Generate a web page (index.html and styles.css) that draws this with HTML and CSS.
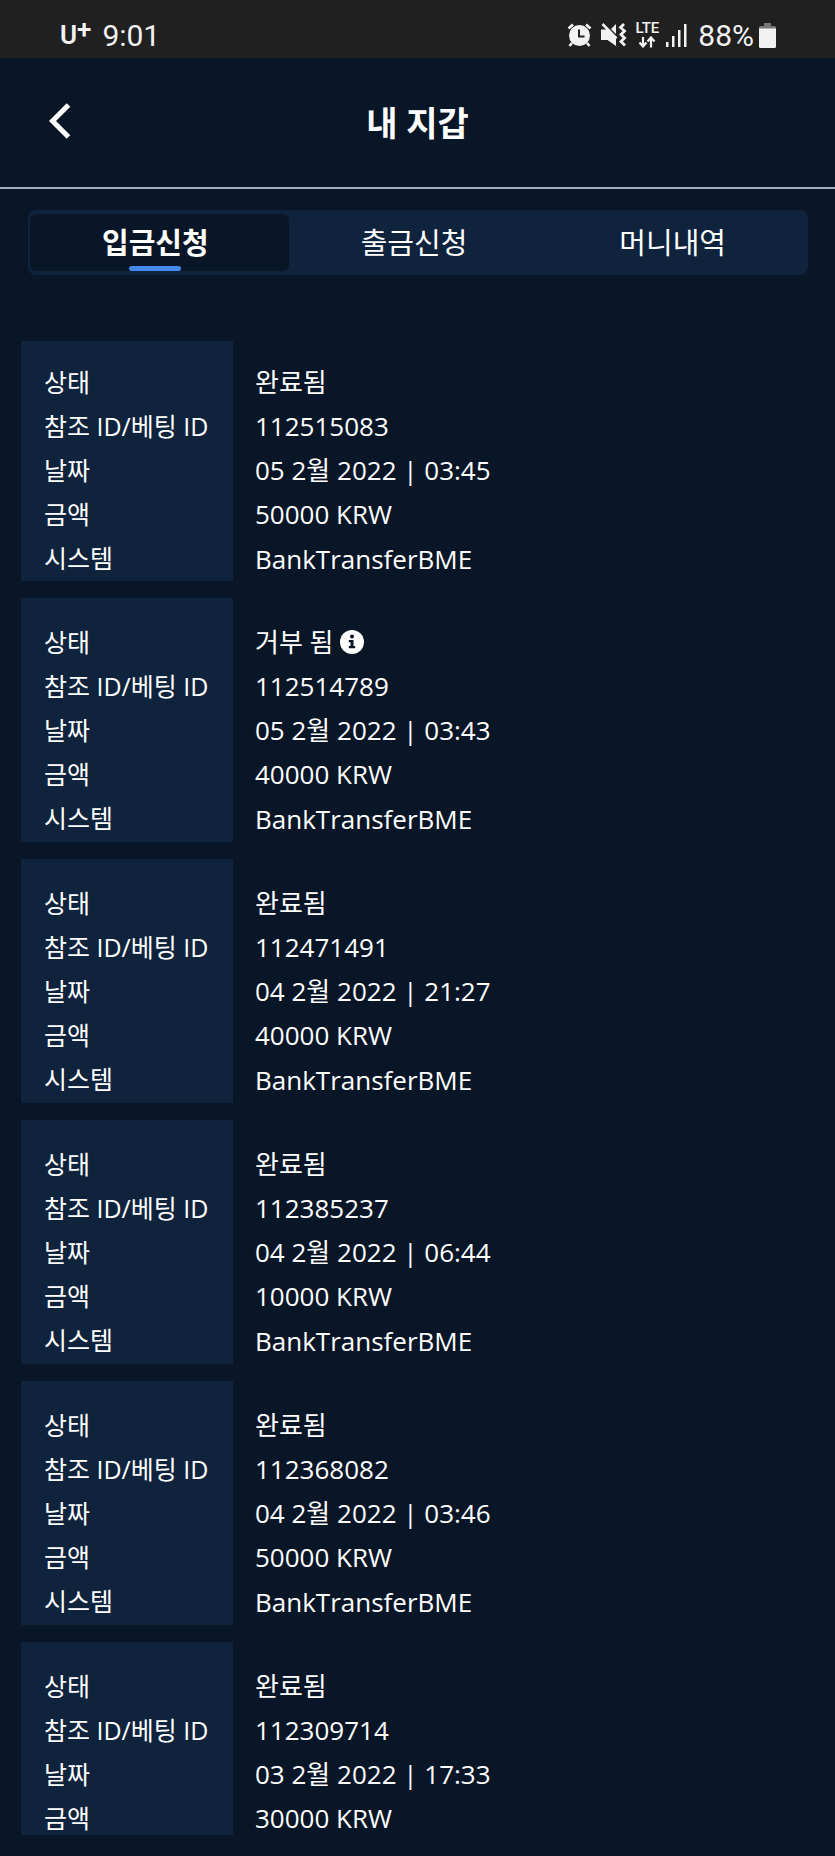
FILE: index.html
```html
<!DOCTYPE html>
<html lang="ko">
<head>
  <meta charset="UTF-8" />
  <meta name="viewport" content="width=device-width, initial-scale=1.0" />
  <title>내 지갑</title>
  <link rel="stylesheet" href="styles.css">
</head>
<body>
  <div class="status-bar">
    <div class="status-left">
      <span class="carrier">U<span class="carrier-plus">+</span></span>
      <span class="clock">9:01</span>
    </div>
    <div class="status-right">
      <svg class="icon-alarm" width="25" height="24" viewBox="0 0 25 24" aria-hidden="true">
        <path d="M1.5 5.5 6 1.5M23.5 5.5 19 1.5M5 20 2.5 23M20 20l2.500 3" fill="none" stroke="#f2f2f2" stroke-width="2.600"/>
        <circle cx="12.500" cy="12.500" r="10.500" fill="#f2f2f2"/>
        <path d="M12 6.500v7h5.500" fill="none" stroke="#202020" stroke-width="2"/>
      </svg>
      <svg class="icon-mute" width="26" height="24" viewBox="0 0 26 24" aria-hidden="true">
        <path d="M0 6.500h6.500L15 15.500V23l-8.500-6H0zM15 1v10l-5-5z" fill="#f2f2f2"/>
        <path d="M1.500 1 15.500 15.500" fill="none" stroke="#f2f2f2" stroke-width="2.600"/>
        <path d="m23 1-3.500 3.500L23.500 8 20 11.500l3.500 3.500-3.500 3.500 4 4" fill="none" stroke="#f2f2f2" stroke-width="2.800"/>
      </svg>
      <div class="network">
        <span>LTE</span>
        <svg width="18" height="12" viewBox="0 0 18 12" aria-hidden="true">
          <path d="M5 1v9M1.500 6.500 5 10.500l3.500-4M13 11.500V2M9.500 5.500 13 1.500l3.500 4" fill="none" stroke="#f2f2f2" stroke-width="2.200"/>
        </svg>
      </div>
      <svg class="icon-signal" width="21" height="23" viewBox="0 0 21 23" aria-hidden="true">
        <path d="M0 18h2.500v5H0zM6 12h2.500v11H6zM12 6h2.500v17H12zM18 0h2.500v23H18z" fill="#f2f2f2"/>
      </svg>
      <span class="battery-level">88%</span>
      <svg class="icon-battery" width="17" height="25" viewBox="0 0 17 25" aria-hidden="true">
        <path d="M5 0h7v3h3.500Q17 3 17 4.500V7H0V4.500Q0 3 1.500 3H5z" fill="#777"/>
        <path d="M0 5.500h17v18q0 1.500-1.500 1.500h-14Q0 25 0 23.500z" fill="#f2f2f2"/>
      </svg>
    </div>
  </div>

  <header class="header">
    <button class="back" type="button" aria-label="뒤로">
      <svg width="22" height="36" viewBox="0 0 22 36" aria-hidden="true">
        <path d="M19.500 2 3.500 18l16 16" fill="none" stroke="#fff" stroke-width="5"/>
      </svg>
    </button>
    <h1>내 지갑</h1>
  </header>

  <nav class="tabs">
    <a class="tab active" href="#deposit">입금신청</a>
    <a class="tab" href="#withdraw">출금신청</a>
    <a class="tab" href="#history">머니내역</a>
  </nav>

  <main class="records">
    <dl class="record">
      <dt>상태</dt><dd>완료됨</dd>
      <dt>참조 ID/베팅 ID</dt><dd>112515083</dd>
      <dt>날짜</dt><dd>05 2월 2022 | 03:45</dd>
      <dt>금액</dt><dd>50000 KRW</dd>
      <dt>시스템</dt><dd>BankTransferBME</dd>
    </dl>
    <dl class="record">
      <dt>상태</dt>
      <dd>거부 됨
        <button class="info" type="button" aria-label="정보">
          <svg width="24" height="24" viewBox="0 0 24 24" aria-hidden="true">
            <circle cx="12" cy="12" r="12" fill="#fff"/>
            <circle cx="12" cy="6.500" r="2" fill="#091627"/>
            <path d="M8.800 10h4.700v6h1.700v2.300H8.800V16h1.700v-3.700H8.800z" fill="#091627"/>
          </svg>
        </button>
      </dd>
      <dt>참조 ID/베팅 ID</dt><dd>112514789</dd>
      <dt>날짜</dt><dd>05 2월 2022 | 03:43</dd>
      <dt>금액</dt><dd>40000 KRW</dd>
      <dt>시스템</dt><dd>BankTransferBME</dd>
    </dl>
    <dl class="record">
      <dt>상태</dt><dd>완료됨</dd>
      <dt>참조 ID/베팅 ID</dt><dd>112471491</dd>
      <dt>날짜</dt><dd>04 2월 2022 | 21:27</dd>
      <dt>금액</dt><dd>40000 KRW</dd>
      <dt>시스템</dt><dd>BankTransferBME</dd>
    </dl>
    <dl class="record">
      <dt>상태</dt><dd>완료됨</dd>
      <dt>참조 ID/베팅 ID</dt><dd>112385237</dd>
      <dt>날짜</dt><dd>04 2월 2022 | 06:44</dd>
      <dt>금액</dt><dd>10000 KRW</dd>
      <dt>시스템</dt><dd>BankTransferBME</dd>
    </dl>
    <dl class="record">
      <dt>상태</dt><dd>완료됨</dd>
      <dt>참조 ID/베팅 ID</dt><dd>112368082</dd>
      <dt>날짜</dt><dd>04 2월 2022 | 03:46</dd>
      <dt>금액</dt><dd>50000 KRW</dd>
      <dt>시스템</dt><dd>BankTransferBME</dd>
    </dl>
    <dl class="record">
      <dt>상태</dt><dd>완료됨</dd>
      <dt>참조 ID/베팅 ID</dt><dd>112309714</dd>
      <dt>날짜</dt><dd>03 2월 2022 | 17:33</dd>
      <dt>금액</dt><dd>30000 KRW</dd>
    </dl>
  </main>
</body>
</html>
```

FILE: styles.css
```css
* { box-sizing: border-box; margin: 0; padding: 0; }
body {
  display: flex;
  flex-direction: column;
  height: 100vh;
  background-color: #091627;
  color: #fff;
  font-family: 'Open Sans', 'Noto Sans CJK KR', sans-serif;
  overflow: hidden;
}
a { text-decoration: none; color: inherit; }
button { background: none; border: 0; color: inherit; cursor: pointer; }
svg { display: block; }

/* phone status bar */
.status-bar {
  display: flex;
  justify-content: space-between;
  flex-shrink: 0;
  height: 58px;
  padding: 12px 59px 0 60px;
  background-color: #202020;
  color: #f2f2f2;
  font-family: Roboto, sans-serif;
}
.status-left,
.status-right {
  display: flex;
  align-items: center;
  height: 46px;
}
.status-left { gap: 11px; }
.carrier {
  display: flex;
  font-size: 26px;
  font-weight: 600;
  line-height: 32px;
}
.carrier-plus {
  font-size: 26px;
  line-height: 20px;
}
.clock,
.battery-level {
  padding-top: 2px;
  font-size: 30px;
  line-height: 32px;
}
.icon-mute { margin-left: 9px; }
.network {
  display: flex;
  flex-direction: column;
  align-items: center;
  gap: 1px;
  margin-left: 8px;
  font-size: 15px;
  font-weight: 500;
  line-height: 13px;
}
.icon-signal { margin-left: 7px; }
.battery-level { margin-left: 11px; }
.icon-battery { margin-left: 5px; }

/* page header */
.header {
  display: grid;
  grid-template-columns: 120px 1fr 120px;
  align-items: center;
  flex-shrink: 0;
  height: 131px;
  border-bottom: 2px solid #a2acba;
}
.back {
  justify-self: start;
  padding: 0 49px 3px;
}
.header h1 {
  font-size: 34px;
  font-weight: 600;
  line-height: 48px;
  text-align: center;
}

.tabs {
  display: flex;
  flex-shrink: 0;
  margin: 21px 27px 0 28px;
  padding: 4px 2px;
  background-color: #0f233c;
  border-radius: 8px;
}
.tab {
  position: relative;
  flex: 1;
  padding-right: 8px;
  border-radius: 6px;
  font-size: 29px;
  line-height: 57px;
  text-align: center;
}
.tab.active {
  background-color: #091627;
  font-weight: 600;
}
.tab.active::after {
  content: '';
  position: absolute;
  bottom: 0;
  left: calc(40% - 4px);
  width: 20%;
  height: 5px;
  background-color: #438aec;
  border-radius: 3px;
}

/* transaction list */
.records {
  flex: 1;
  min-height: 0;
  margin: 66px 21px 21px;
  overflow-y: auto;
  scrollbar-width: none;
}
.record {
  display: grid;
  grid-template-columns: 212px 1fr;
  margin-bottom: 17px;
  font-size: 26px;
  line-height: 44px;
}
.record dt {
  padding-left: 23px;
  background-color: #0f233c;
  font-size: 25px;
  white-space: nowrap;
}
.record dd {
  display: flex;
  align-items: center;
  gap: 6px;
  padding-left: 22px;
}
.record dt:first-of-type,
.record dd:first-of-type { padding-top: 22px; }
.record dt:nth-of-type(5) { padding-bottom: 2px; }
.record:first-child dt:first-of-type,
.record:first-child dd:first-of-type { padding-top: 19px; }
.record:first-child dt:nth-of-type(5) { padding-bottom: 1px; }
```
